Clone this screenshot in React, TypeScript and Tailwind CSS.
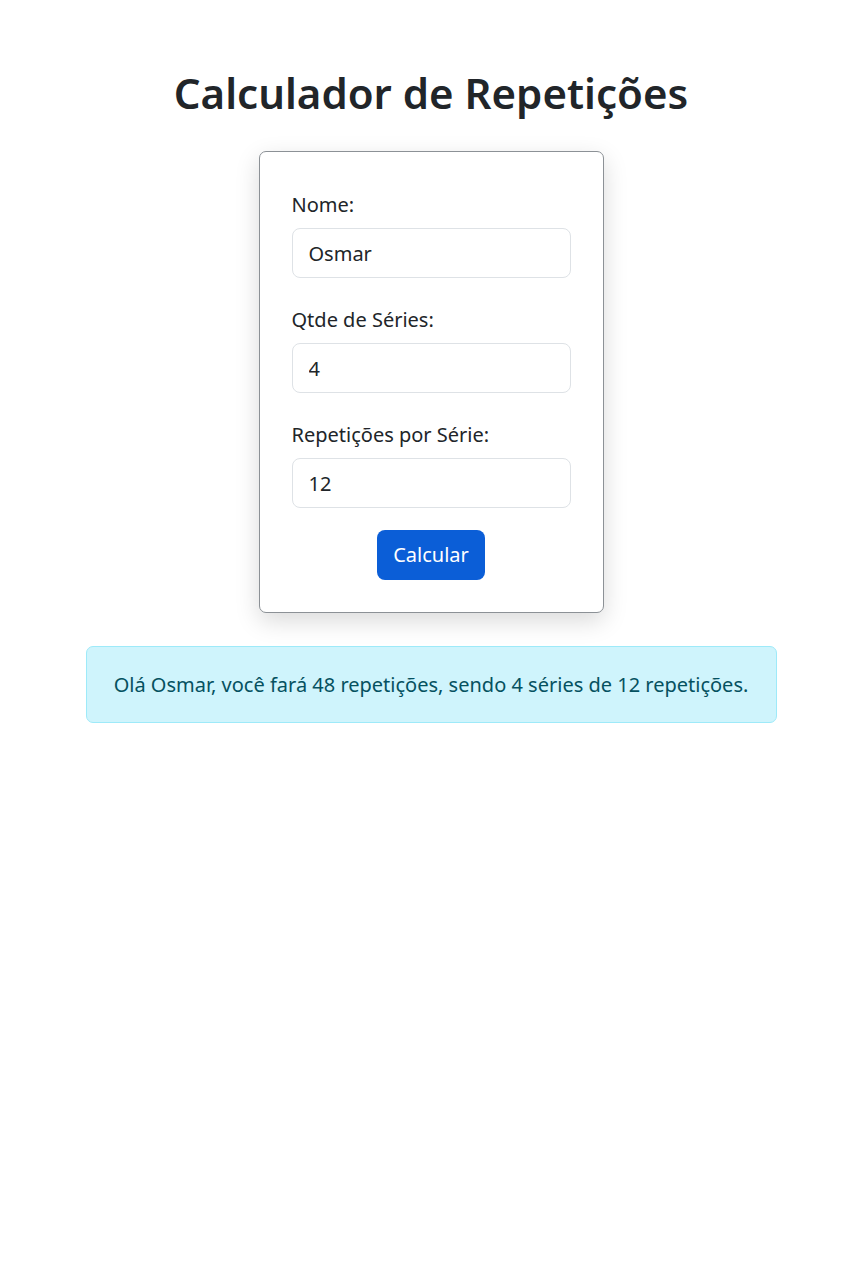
import { useState } from "react";

export default function App() {
  const [nome, setNome] = useState("Osmar");
  const [series, setSeries] = useState("4");
  const [reps, setReps] = useState("12");
  const [res, setRes] = useState({ nome: "Osmar", series: 4, reps: 12 });

  const calcular = () => {
    setRes({ nome, series: Number(series) || 0, reps: Number(reps) || 0 });
  };

  const input =
    "block w-full h-[50px] px-4 text-[20px] text-[#212529] bg-white border border-[#dee2e6] rounded-[8px] outline-none";

  return (
    <div className="min-h-screen bg-white text-[#212529] font-['Segoe_UI','Noto_Sans',sans-serif]">
      <h1 className="pt-[68px] text-center text-[42px] font-semibold leading-[1.2] text-[#212529]">
        Calculador de Repetições
      </h1>

      <div className="mx-auto mt-[33px] w-[345px] border border-[#8c9196] rounded-[7px] bg-white shadow-[0_8px_24px_rgba(0,0,0,0.15)] px-[32px] pt-[38px] pb-[32px]">
        <label className="block text-[20px] leading-[30px] mb-[8px]">Nome:</label>
        <input className={input} value={nome} onChange={(e) => setNome(e.target.value)} />

        <label className="block text-[20px] leading-[30px] mb-[8px] mt-[27px]">Qtde de Séries:</label>
        <input className={input} value={series} onChange={(e) => setSeries(e.target.value)} />

        <label className="block text-[20px] leading-[30px] mb-[8px] mt-[27px]">Repetições por Série:</label>
        <input className={input} value={reps} onChange={(e) => setReps(e.target.value)} />

        <div className="flex justify-center mt-[22px]">
          <button
            onClick={calcular}
            className="h-[50px] px-4 rounded-[8px] bg-[#0b5ed7] text-white text-[20px]"
          >
            Calcular
          </button>
        </div>
      </div>

      <div className="mx-auto mt-[33px] w-[691px] h-[77px] flex items-center justify-center bg-[#cff4fc] border border-[#9eeaf9] rounded-[7px] text-[20px] text-[#055160]">
        Olá {res.nome}, você fará {res.series * res.reps} repetições, sendo {res.series} séries de {res.reps} repetições.
      </div>
    </div>
  );
}
